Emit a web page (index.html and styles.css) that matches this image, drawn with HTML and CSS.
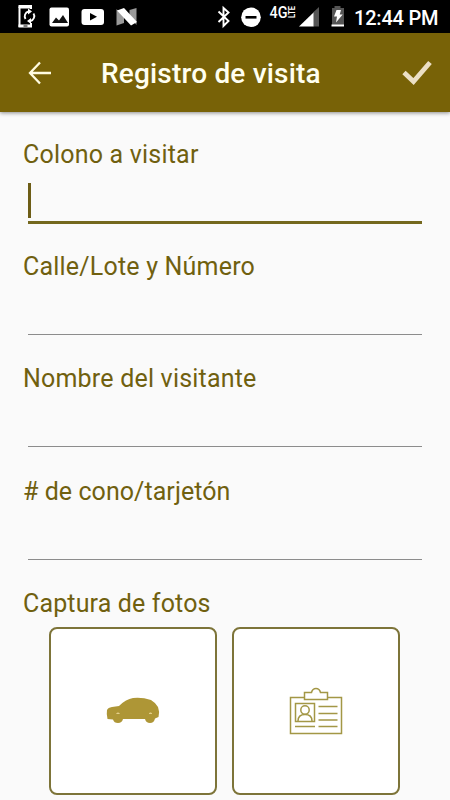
FILE: index.html
```html
<!DOCTYPE html>
<html lang="es">
<head>
<meta charset="utf-8">
<title>Registro de visita</title>
<link rel="stylesheet" href="styles.css">
</head>
<body>
<div class="status">
  <svg class="status-left" width="150" height="33" viewBox="0 0 150 33">
    <path d="M31 9V7.500H19.500V26H31V23" fill="none" stroke="#fff" stroke-width="2"/>
    <path d="M18.500 6.500h13.500M18.500 26h13.500" stroke="#fff" stroke-width="2.800"/>
    <path d="M23.500 26h4" stroke="#000"/>
    <path d="M25.500 19a5 5 0 0 1 3-7.500M33.500 13.500a5 5 0 0 1-3 7.500" fill="none" stroke="#fff" stroke-width="1.900"/>
    <path d="M28 8.500l4 3-4 3zM31 18l-4 3 4 3z" fill="#fff"/>
    <rect x="49.500" y="7.500" width="19.500" height="19" rx="2" fill="#fff"/>
    <path d="M52 23l4-5.500 3 3 4-5.500 5 8z" fill="#111"/>
    <rect x="81.500" y="9" width="22.500" height="16" rx="3" fill="#fff"/>
    <path d="M90 13v7.500l7-3.700z" fill="#000"/>
    <path d="M116.500 9l7.500 8v6l-7.500 2.500zM129.500 10l7-2v17l-7-8z" fill="#999"/>
    <path d="M117 10.500l7-2.500L137 22l-6 3.500z" fill="#fff"/>
  </svg>
  <svg class="status-right" width="136" height="33" viewBox="214 0 136 33">
    <path d="M218.500 11.500l10 9.500-5 5V8l5 4.500-10 9.500" fill="none" stroke="#fff" stroke-width="1.900"/>
    <circle cx="251" cy="17.300" r="9.800" fill="#fff"/>
    <path d="M245.500 17.300h11" stroke="#000" stroke-width="2.600"/>
    <text class="net" x="269.500" y="17.700" textLength="18" lengthAdjust="spacingAndGlyphs">4G</text>
    <text class="lte" transform="translate(295 18) rotate(-90)" x="0" y="0" textLength="12" lengthAdjust="spacingAndGlyphs">LTE</text>
    <path d="M319 7v19.500h-6V12.500z" fill="#555"/>
    <path d="M299 26.500L313.500 12.500v14z" fill="#fff"/>
    <path d="M332 8h2.500V6h6v2h3.500v18h-12z" fill="#555"/>
    <path d="M331.500 25.500h12.500" stroke="#fff" stroke-width="2"/>
    <path d="M336.500 10h4.500l-1.300 4.500h3L336 22.500l1-6h-3z" fill="#fff"/>
  </svg>
  <span class="clock">12:44 PM</span>
</div>
<header class="appbar">
  <svg class="back" width="24" height="24" viewBox="0 0 24 24"><path d="M12 1.500L2 12l10 10.500M2 12h21" fill="none" stroke="#fffbe0" stroke-width="2.300"/></svg>
  <h1 class="title">Registro de visita</h1>
  <svg class="check" width="30" height="26" viewBox="0 0 30 26"><path d="M2 12.500l9.500 9L28 2.500" fill="none" stroke="#ebdfc5" stroke-width="4.800"/></svg>
</header>
<main class="form">
  <div class="field"><label class="label">Colono a visitar</label><div class="input focused"><span class="caret"></span></div></div>
  <div class="field"><label class="label">Calle/Lote y Número</label><div class="input"></div></div>
  <div class="field"><label class="label">Nombre del visitante</label><div class="input"></div></div>
  <div class="field"><label class="label cone"># de cono/tarjetón</label><div class="input"></div></div>
  <div class="label photos-label">Captura de fotos</div>
  <div class="photos">
    <div class="photo">
      <svg width="54" height="28" viewBox="0 0 54 28">
        <path d="M1 13Q2 10.500 6 10L13 9Q20 2 27 1Q36 0 45 3Q50 6 52 10Q54 15 52.500 20L49 21.500Q48 26 44 26Q40 26 39 22H17Q16 26 12 26Q8 26 7 22.500L1.500 22Q.3 17 1 13Z" fill="#ae9636"/>
        <path d="M10.500 16.500l1.500-.7 1.500 .7zM43 16.500l1.500-.7 1.500 .7z" fill="#f3dfa0" stroke="#f3dfa0" stroke-width=".5"/>
      </svg>
    </div>
    <div class="photo">
      <svg width="54" height="48" viewBox="0 0 54 48" fill="none" stroke="#a39746" stroke-width="1.500">
        <path d="M15.500 10.500H1.500v36h51v-36H38.500"/>
        <path d="M15.500 5.500h7q1-4 4.500-4t4.500 4h7v7h-23z"/>
        <rect x="6.500" y="16.500" width="19" height="18"/>
        <circle cx="16" cy="23" r="4.200"/>
        <path d="M9 34q0-6.500 7-6.500t7 6.500M29.500 19.500h19M29.500 26.500h19M29.500 33h19M29.500 39.500h19M6 39.500h20"/>
      </svg>
    </div>
  </div>
</main>
</body>
</html>
```
FILE: styles.css
```css
* { box-sizing: border-box; }
body {
  margin: 0;
  height: 800px;
  overflow: hidden;
  background: #fafafa;
  font-family: Roboto, sans-serif;
}
svg { display: block; flex: none; }
.status {
  display: flex;
  height: 33px;
  background: #000;
}
.status-right { margin-left: 64px; }
.net { font: 500 16px Roboto, sans-serif; fill: #fff; }
.lte { font: 700 9px Roboto, sans-serif; fill: #fff; }
.clock {
  margin-left: 4px;
  color: #fff;
  font-size: 20px;
  font-weight: 500;
  letter-spacing: -.2px;
  line-height: 36px;
  white-space: nowrap;
}
.appbar {
  display: flex;
  align-items: center;
  height: 79px;
  padding: 0 18px 0 28px;
  background: #786207;
  box-shadow: 0 1px 4px rgba(0, 0, 0, .45);
}
.title {
  flex: 1;
  margin: 2px 0 0 49px;
  color: #fffff0;
  font-size: 28px;
  font-weight: 500;
  letter-spacing: .18px;
  line-height: 34px;
  white-space: nowrap;
}
.form { padding: 27.500px 23px 0; }
.field { height: 112.400px; }
.label {
  display: block;
  color: #70600f;
  font-size: 25px;
  letter-spacing: .2px;
  line-height: 30px;
  white-space: nowrap;
}
.cone { letter-spacing: .06px; }
.photos-label { letter-spacing: .15px; }
.input {
  height: 53px;
  margin: 0 5px;
  border-bottom: 1.500px solid #8c8c8c;
}
.focused {
  display: flex;
  align-items: flex-end;
  height: 54.500px;
  padding-bottom: 3px;
  border-bottom: 3px solid #74681e;
}
.caret { width: 3px; height: 35px; background: #6d5d16; }
.photos {
  display: flex;
  gap: 15px;
  margin-top: 8px;
  padding-left: 26px;
}
.photo {
  display: flex;
  align-items: center;
  justify-content: center;
  width: 168px;
  height: 168px;
  border: 2px solid #7d7439;
  border-radius: 8px;
  background: #fff;
}
```
